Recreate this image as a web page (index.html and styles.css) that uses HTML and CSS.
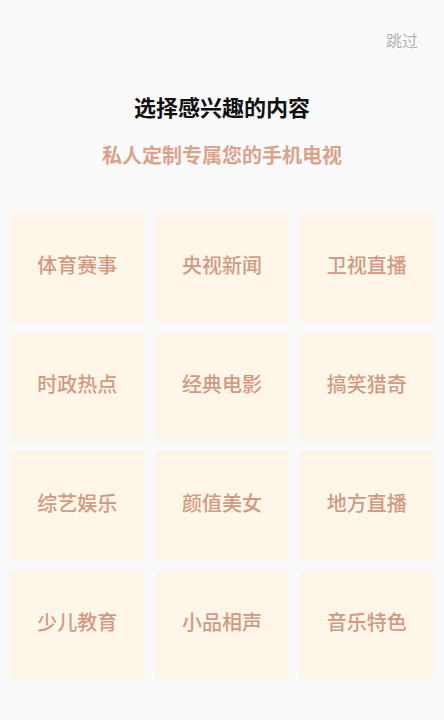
FILE: index.html
```html
<!DOCTYPE html>
<html lang="zh-CN">
<head>
<meta charset="utf-8">
<link rel="stylesheet" href="styles.css">
</head>
<body>
<div class="page">
  <div class="topbar"><span class="skip">跳过</span></div>
  <h1 class="title">选择感兴趣的内容</h1>
  <p class="subtitle">私人定制专属您的手机电视</p>
  <div class="grid">
    <div class="card">体育赛事</div>
    <div class="card">央视新闻</div>
    <div class="card">卫视直播</div>
    <div class="card">时政热点</div>
    <div class="card">经典电影</div>
    <div class="card">搞笑猎奇</div>
    <div class="card">综艺娱乐</div>
    <div class="card">颜值美女</div>
    <div class="card">地方直播</div>
    <div class="card">少儿教育</div>
    <div class="card">小品相声</div>
    <div class="card">音乐特色</div>
  </div>
</div>
</body>
</html>
```

FILE: styles.css
```css
html, body {
  margin: 0;
  padding: 0;
  background: #fbfafa;
}
body {
  font-family: "Noto Sans CJK SC", "Noto Sans", sans-serif;
  width: 444px;
  height: 720px;
  overflow: hidden;
}
.page {
  display: flex;
  flex-direction: column;
}
.topbar {
  display: flex;
  justify-content: flex-end;
  padding: 27px 26px 0 0;
  height: 26px;
}
.skip {
  font-size: 16px;
  line-height: 26px;
  color: #b3b3b3;
}
.title {
  margin: 38px 0 0;
  text-align: center;
  font-size: 22px;
  line-height: 30px;
  font-weight: 700;
  color: #111;
}
.subtitle {
  margin: 19px 0 0;
  text-align: center;
  font-size: 20px;
  line-height: 30px;
  font-weight: 700;
  color: #d9a38c;
}
.grid {
  margin-top: 43px;
  padding: 0 10px;
  display: grid;
  grid-template-columns: repeat(3, 1fr);
  grid-auto-rows: 109px;
  gap: 10px;
}
.card {
  background: #fef6e8;
  display: flex;
  align-items: center;
  justify-content: center;
  font-size: 20px;
  font-weight: 500;
  color: #d29a82;
  padding-bottom: 6px;
  box-sizing: border-box;
}
```
